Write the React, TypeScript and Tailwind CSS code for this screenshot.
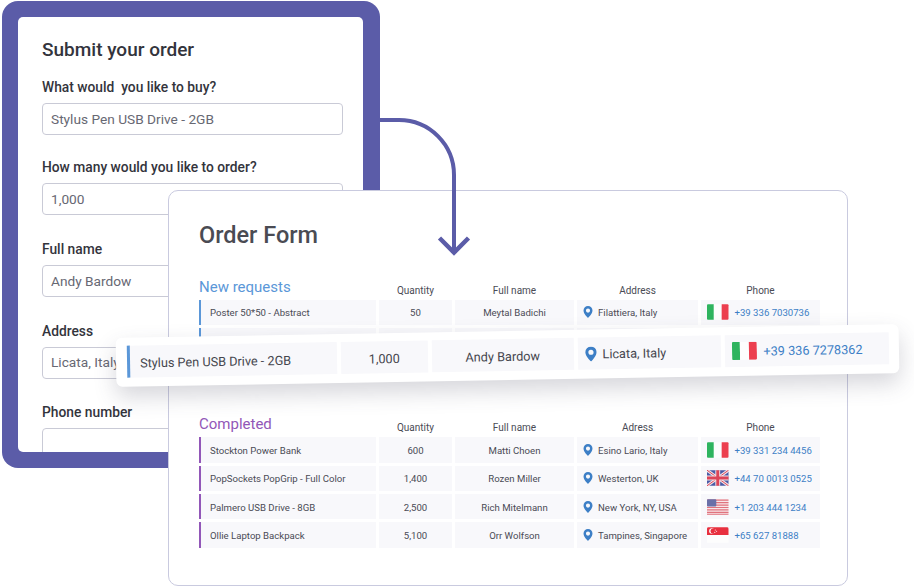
import type { ReactNode } from "react";

type Flag = "it" | "uk" | "us" | "sg";

type Order = {
  item: string;
  qty: string;
  name: string;
  address: string;
  flag: Flag;
  phone: string;
};

const completed: Order[] = [
  { item: "Stockton Power Bank", qty: "600", name: "Matti Choen", address: "Esino Lario, Italy", flag: "it", phone: "+39 331 234 4456" },
  { item: "PopSockets PopGrip - Full Color", qty: "1,400", name: "Rozen Miller", address: "Westerton, UK", flag: "uk", phone: "+44 70 0013 0525" },
  { item: "Palmero USB Drive - 8GB", qty: "2,500", name: "Rich Mitelmann", address: "New York, NY, USA", flag: "us", phone: "+1 203 444 1234" },
  { item: "Ollie Laptop Backpack", qty: "5,100", name: "Orr Wolfson", address: "Tampines, Singapore", flag: "sg", phone: "+65 627 81888" },
];

function Pin({ className }: { className: string }) {
  return (
    <svg viewBox="0 0 12 15" className={className}>
      <path
        fillRule="evenodd"
        fill="#3d7fc6"
        d="M6 0a5.6 5.6 0 0 0-5.6 5.6C.4 9.2 4 13 6 15c2-2 5.6-5.8 5.6-9.4A5.6 5.6 0 0 0 6 0Zm0 3.1a2.6 2.6 0 1 1 0 5.2 2.6 2.6 0 0 1 0-5.2Z"
      />
    </svg>
  );
}

function FlagIcon({ flag, className }: { flag: Flag; className: string }) {
  if (flag === "it") {
    return (
      <svg viewBox="0 0 22 16" className={className}>
        <path fill="#2fb45f" d="M1 0h6v16H1a1 1 0 0 1-1-1V1a1 1 0 0 1 1-1Z" />
        <rect x="7" width="8" height="16" fill="#fdfdfd" />
        <path fill="#ec3f4f" d="M15 0h6a1 1 0 0 1 1 1v14a1 1 0 0 1-1 1h-6Z" />
      </svg>
    );
  }
  if (flag === "uk") {
    return (
      <svg viewBox="0 0 22 16" className={className}>
        <rect width="22" height="16" rx="2" fill="#4a5aa6" />
        <path stroke="#f1e3e6" strokeWidth="3" d="M0 0l22 16M22 0L0 16" />
        <path stroke="#dc4458" strokeWidth="1" d="M0 0l22 16M22 0L0 16" />
        <path stroke="#f1e3e6" strokeWidth="5" d="M11 0v16M0 8h22" />
        <path stroke="#dc4458" strokeWidth="3" d="M11 0v16M0 8h22" />
      </svg>
    );
  }
  if (flag === "us") {
    return (
      <svg viewBox="0 0 22 16" className={className}>
        <rect width="22" height="16" rx="1.5" fill="#f8e6e8" />
        <path stroke="#e0737e" strokeWidth="1.200" d="M0 1h22M0 3.500h22M0 6h22M0 8.500h22M0 11h22M0 13.500h22M0 15.400h22" />
        <rect width="9.500" height="7.500" rx="1" fill="#6a70a8" />
      </svg>
    );
  }
  return (
    <svg viewBox="0 0 22 16" className={className}>
      <path fill="#e8303f" d="M1.500 0h19A1.500 1.500 0 0 1 22 1.500V8H0V1.500A1.500 1.500 0 0 1 1.500 0Z" />
      <rect y="8" width="22" height="8" fill="#fdfdfd" />
      <circle cx="5" cy="4" r="2.800" fill="#fff" />
      <circle cx="6.200" cy="4" r="2.600" fill="#e8303f" />
      <circle cx="8.500" cy="2.800" r="0.550" fill="#fff" />
      <circle cx="9.800" cy="4.200" r="0.550" fill="#fff" />
      <circle cx="8" cy="5.300" r="0.550" fill="#fff" />
    </svg>
  );
}

function Cell({ className, children }: { className?: string; children: ReactNode }) {
  return <div className={`flex items-center bg-[#f8f8fb] ${className ?? ""}`}>{children}</div>;
}

function Row({ order, accent }: { order: Order; accent: string }) {
  return (
    <div className="grid h-[25.3px] grid-cols-[177px_73px_119px_121px_119px] gap-x-[3px] text-[9.6px] text-[#4a4b55]">
      <Cell className={`border-l-[2.5px] pl-[9px] pt-[2px] ${accent}`}>{order.item}</Cell>
      <Cell className="justify-center pt-[2px]">{order.qty}</Cell>
      <Cell className="justify-center pt-[2px]">{order.name}</Cell>
      <Cell className="pl-[6px]">
        {order.address && <Pin className="mr-[5px] h-[12px] w-[10px] shrink-0" />}
        <span className="pt-[2px]">{order.address}</span>
      </Cell>
      <Cell className="pl-[6px]">
        {order.phone && <FlagIcon flag={order.flag} className="mr-[6px] h-[16px] w-[21.500px] shrink-0" />}
        <span className="pt-[2px] text-[#3d7fc6]">{order.phone}</span>
      </Cell>
    </div>
  );
}

function TableHead({ title, color, address }: { title: string; color: string; address: string }) {
  return (
    <div className="grid grid-cols-[177px_73px_119px_121px_119px] items-end gap-x-[3px] text-center text-[10px] leading-[15px] text-[#4a4b55]">
      <div className={`pb-[3px] text-left text-[15px] leading-[20px] ${color}`}>{title}</div>
      <div className="pb-[2px]">Quantity</div>
      <div className="pb-[2px]">Full name</div>
      <div className="pb-[2px]">{address}</div>
      <div className="pb-[2px]">Phone</div>
    </div>
  );
}

function FormField({ label, value, gap }: { label: string; value?: string; gap: string }) {
  return (
    <div className={gap}>
      <div className="text-[13.800px] font-medium leading-[18px] text-[#33343c]">{label}</div>
      <div className="mt-[7px] flex h-[32px] w-[301px] items-center rounded-[4px] border-[1.5px] border-[#c9cad6] pl-[8px] text-[13.700px] text-[#676873]">
        {value}
      </div>
    </div>
  );
}

export default function App() {
  return (
    <div className="relative h-[588px] w-[914px] overflow-hidden bg-white font-['Roboto',sans-serif]">
      {/* purple form frame */}
      <div className="absolute left-[2px] top-[1px] h-[467px] w-[378px] rounded-[16px] bg-[#5b5ca8] p-[16px] pr-[17px]">
        <div className="h-[435px] overflow-hidden rounded-[5px] bg-white pl-[24px] pt-[21px]">
          <div className="text-[19px] font-medium leading-[24px] text-[#33343c]">Submit your order</div>
          <FormField label="What would  you like to buy?" value="Stylus Pen USB Drive - 2GB" gap="mt-[16px] whitespace-pre" />
          <FormField label="How many would you like to order?" value="1,000" gap="mt-[23.300px]" />
          <FormField label="Full name" value="Andy Bardow" gap="mt-[24.700px]" />
          <FormField label="Address" value="Licata, Italy" gap="mt-[24.700px]" />
          <FormField label="Phone number" gap="mt-[24.700px]" />
        </div>
      </div>

      {/* order board */}
      <div className="absolute left-[168px] top-[190px] h-[396px] w-[680px] rounded-[10px] border-[1.5px] border-[#c9cadf] bg-white pl-[30px] pt-[28px]">
        <div className="text-[23.500px] font-medium leading-[32px] text-[#4a4b53]">Order Form</div>
        <div className="mt-[25.500px]">
          <TableHead title="New requests" color="text-[#5b97d8]" address="Address" />
        </div>
        <div className="flex flex-col gap-[3px]">
          <Row
            accent="border-[#5b97d8]"
            order={{ item: "Poster 50*50 - Abstract", qty: "50", name: "Meytal Badichi", address: "Filattiera, Italy", flag: "it", phone: "+39 336 7030736" }}
          />
          <Row accent="border-[#5b97d8]" order={{ item: "", qty: "", name: "", address: "", flag: "it", phone: "" }} />
        </div>
        <div className="mt-[61.400px]">
          <TableHead title="Completed" color="text-[#9257b8]" address="Adress" />
        </div>
        <div className="flex flex-col gap-[3px]">
          {completed.map((order) => (
            <Row key={order.item} order={order} accent="border-[#9257b8]" />
          ))}
        </div>
      </div>

      {/* connector arrow */}
      <svg viewBox="0 0 914 588" className="pointer-events-none absolute left-0 top-0 h-[588px] w-[914px]">
        <path d="M380 120h19a55 55 0 0 1 55 55V252" fill="none" stroke="#5b5ca8" strokeWidth="4" />
        <path d="M439.500 238l14.500 14.500 14.500-14.500" fill="none" stroke="#5b5ca8" strokeWidth="4.500" />
      </svg>

      {/* highlighted row, lifted and slightly tilted */}
      <div className="absolute left-[116px] top-[331px] h-[49px] w-[783px] -rotate-1 rounded-[6px] bg-white pl-[11px] pt-[8px] shadow-[0_10px_22px_rgba(70,70,90,0.22)]">
        <div className="grid h-[32px] grid-cols-[210px_87.500px_142.500px_143.500px_164.500px] gap-x-[3.500px] text-[12.700px] text-[#45464e]">
          <Cell className="border-l-[3px] border-[#5b97d8] pl-[10px] pt-[3px]">Stylus Pen USB Drive - 2GB</Cell>
          <Cell className="justify-center pt-[3px]">1,000</Cell>
          <Cell className="justify-center pt-[3px]">Andy Bardow</Cell>
          <Cell className="pl-[7px]">
            <Pin className="mr-[6px] h-[15px] w-[12px] shrink-0" />
            <span className="pt-[2px]">Licata, Italy</span>
          </Cell>
          <Cell className="pl-[7px]">
            <FlagIcon flag="it" className="mr-[7px] h-[18px] w-[25px] shrink-0" />
            <span className="pt-[2px] text-[#3d7fc6]">+39 336 7278362</span>
          </Cell>
        </div>
      </div>
    </div>
  );
}
